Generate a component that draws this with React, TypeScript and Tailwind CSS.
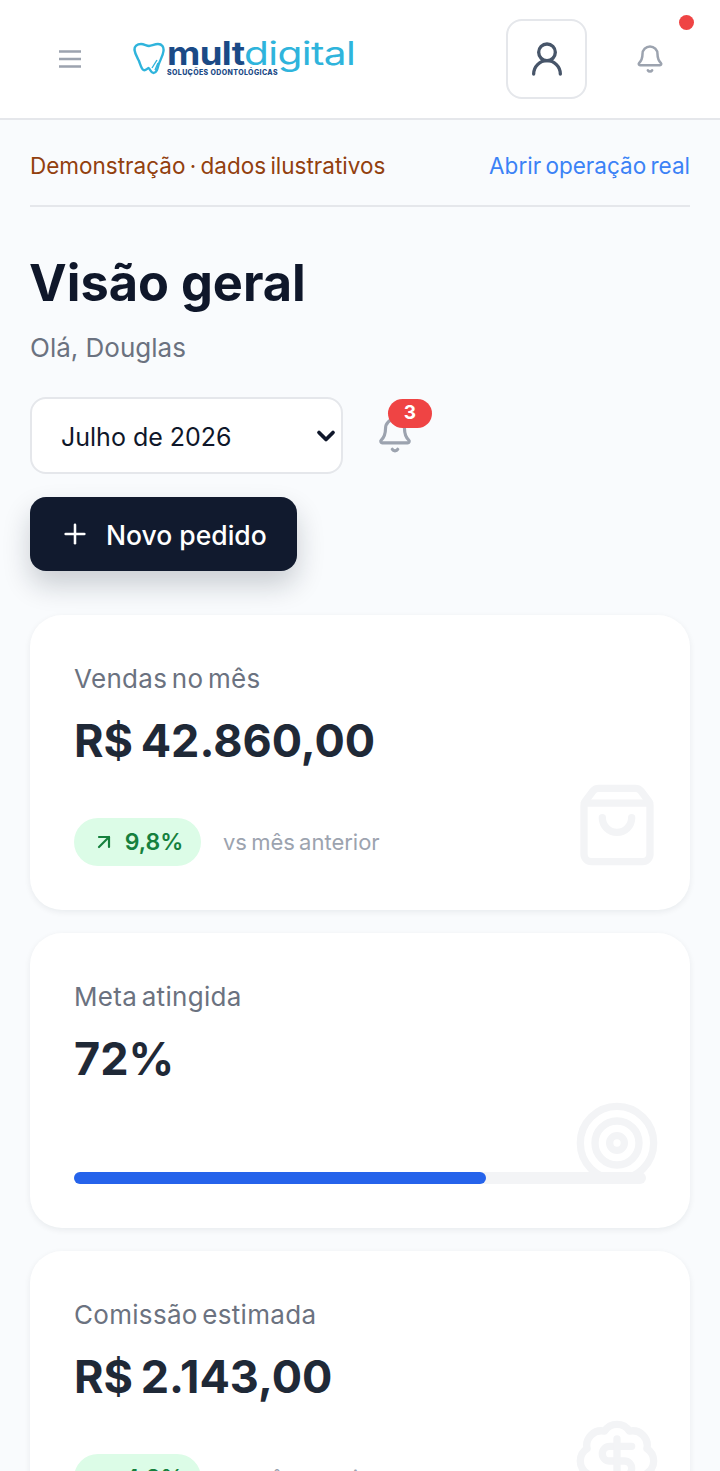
import { ArrowUpRight, BadgeDollarSign, Bell, ChevronDown, Plus, ShoppingBag, Target, UserRound } from "lucide-react";

function Logo() {
  return (
    <div className="relative ml-[52px] flex h-[34px] w-[222px] items-start">
      <svg width="32" height="33" viewBox="0 0 32 33" fill="none" className="shrink-0">
        <path
          d="M8 2c3 0 5 1.500 8 2 3-.500 6-2 9-2 4 0 6 3 5.500 7-.500 5-3.500 9-5 14-1 4-2 8-5 8-3 0-3-4-5-5-2 1-3 3-5 2-2-1-3-5-4.500-9C4 15 2 12 1.500 8 1.200 4.500 4 2 8 2Z"
          stroke="#2fb4dc"
          strokeWidth="2.400"
          strokeLinejoin="round"
        />
        <path d="M19 26l5-8M22 28l3-7" stroke="#2fb4dc" strokeWidth="1.400" />
      </svg>
      <p className="relative ml-[2px] h-[24px] w-[188px] font-['Inter',sans-serif] text-[32px] leading-[24px] tracking-[-0.5px]">
        <span className="absolute top-0 left-0 origin-left scale-x-[1.14] font-bold text-[#1b4a86]">mult</span>
        <span className="absolute top-0 left-[77px] origin-left scale-x-[1.27] font-normal text-[#2fb4dc]">digital</span>
      </p>
      <span className="absolute top-[27px] left-[34px] font-['Inter',sans-serif] text-[7px] leading-[7px] font-extrabold tracking-[0.38px] whitespace-nowrap text-[#1b4a86]">
        SOLUÇÕES ODONTOLÓGICAS
      </span>
    </div>
  );
}

function StatCard({
  label,
  value,
  icon,
  children,
}: {
  label: string;
  value: string;
  icon: React.ReactNode;
  children: React.ReactNode;
}) {
  return (
    <section className="relative h-[295px] shrink-0 overflow-hidden rounded-[32px] bg-white px-[44px] pt-[46px] shadow-[0_2px_6px_rgba(15,23,42,0.07)]">
      <p className="text-[26px] leading-[36px] tracking-[0.3px] [word-spacing:-3px] text-[#6b7280]">{label}</p>
      <p className="mt-[12px] text-[45px] leading-[64px] font-bold [word-spacing:-3px] text-[#1f2937]">{value}</p>
      {children}
      <div className="absolute right-[29px] bottom-[41px] text-[#f3f4f6]">{icon}</div>
    </section>
  );
}

function Trend({ value }: { value: string }) {
  return (
    <div className="mt-[45px] flex items-center gap-[22px]">
      <span className="flex h-[48px] w-[127px] items-center justify-center gap-[9px] rounded-full bg-[#dcfce7] text-[23px] font-semibold text-[#15803d]">
        <ArrowUpRight size={24} strokeWidth={2.2} />
        {value}
      </span>
      <span className="text-[22px] [word-spacing:-2px] text-[#9ca3af]">vs mês anterior</span>
    </div>
  );
}

export default function App() {
  return (
    <div className="h-[1471px] overflow-hidden bg-[#f9fbfd] font-['Inter',sans-serif]">
      <header className="relative flex h-[120px] items-center border-b-2 border-[#e5e7eb] bg-white pl-[59px]">
        <svg width="22" height="18" viewBox="0 0 22 18" fill="none" stroke="#9ca3af" strokeWidth="2.600" className="shrink-0">
          <path d="M0 1.500h22M0 9h22M0 16.500h22" />
        </svg>
        <Logo />
        <button className="ml-[151px] flex h-[80px] w-[81px] items-center justify-center rounded-[16px] border-2 border-[#e5e7eb] bg-white">
          <UserRound size={40} strokeWidth={2} className="text-[#475569]" />
        </button>
        <button className="ml-[48px] flex items-center justify-center">
          <Bell size={30} strokeWidth={2} className="text-[#9ca3af]" />
        </button>
        <span className="absolute top-[15px] left-[679px] h-[15px] w-[15px] rounded-full bg-[#ef4444]" />
      </header>

      <main className="px-[30px]">
        <div className="flex h-[87px] items-center justify-between border-b-2 border-[#e5e7eb] pt-[6px] text-[22.5px] [word-spacing:-2px]">
          <span className="text-[#92400e]">Demonstração · dados ilustrativos</span>
          <a className="text-[#3b82f6]">Abrir operação real</a>
        </div>

        <h1 className="mt-[41px] -ml-[1px] text-[50.5px] leading-[70px] font-bold text-[#0f172a]">Visão geral</h1>
        <p className="mt-[12px] text-[26px] leading-[36px] text-[#6b7280]">Olá, Douglas</p>

        <div className="mt-[31px] flex items-center">
          <div className="relative h-[77px] w-[313px] shrink-0">
            <select className="h-full w-full appearance-none rounded-[16px] border-2 border-[#e5e7eb] bg-white pt-[4px] pl-[29px] text-[25px] text-[#0f172a]">
              <option>Julho de 2026</option>
            </select>
            <ChevronDown size={28} strokeWidth={3.2} className="pointer-events-none absolute top-[25px] left-[282px] text-[#0f172a]" />
          </div>
          <div className="relative ml-[33px] h-[77px] w-[40px]">
            <Bell size={38} strokeWidth={2} className="absolute top-[19px] left-0 text-[#9ca3af]" />
            <span className="absolute top-[2px] left-[12px] flex h-[29px] w-[44px] items-center justify-center rounded-full bg-[#ef4444] text-[19px] font-bold text-white">
              3
            </span>
          </div>
        </div>

        <button className="mt-[23px] flex h-[74px] w-[267px] items-center gap-[15px] rounded-[16px] bg-[#111a2e] pl-[29px] text-[26.5px] font-medium text-white shadow-[0_14px_28px_rgba(15,23,42,0.2)]">
          <Plus size={32} strokeWidth={1.9} />
          <span className="pt-[3px]">Novo pedido</span>
        </button>

        <div className="mt-[44px] flex flex-col gap-[23px]">
          <StatCard label="Vendas no mês" value="R$ 42.860,00" icon={<ShoppingBag size={88} strokeWidth={2} />}>
            <Trend value="9,8%" />
          </StatCard>
          <StatCard label="Meta atingida" value="72%" icon={<Target size={88} strokeWidth={2} />}>
            <div className="mt-[81px] h-[12px] w-full rounded-full bg-[#f3f4f6]">
              <div className="relative z-10 h-full rounded-full bg-[#2563eb]" style={{ width: "72%" }} />
            </div>
          </StatCard>
          <StatCard label="Comissão estimada" value="R$ 2.143,00" icon={<BadgeDollarSign size={88} strokeWidth={2} />}>
            <Trend value="4,8%" />
          </StatCard>
        </div>
      </main>
    </div>
  );
}
